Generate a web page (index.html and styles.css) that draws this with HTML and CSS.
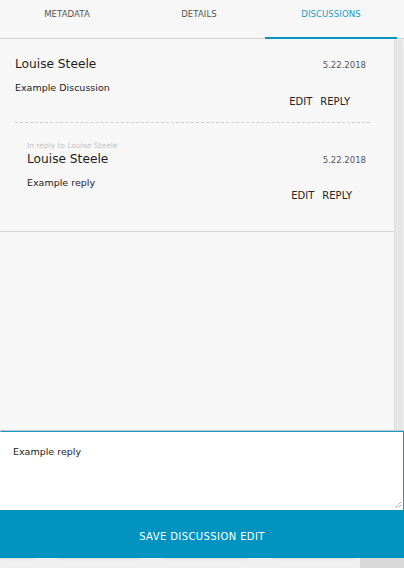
FILE: index.html
```html
<!DOCTYPE html>
<html>
<head>
<meta charset="utf-8">
<link rel="stylesheet" href="styles.css">
</head>
<body>
<div class="app">
  <nav class="tabs">
    <div class="tab">METADATA</div>
    <div class="tab">DETAILS</div>
    <div class="tab active">DISCUSSIONS</div>
  </nav>
  <div class="main">
    <div class="content">
      <div class="thread">
        <div class="post first">
          <div class="post-head">
            <span class="name">Louise Steele</span>
            <span class="date">5.22.2018</span>
          </div>
          <div class="body">Example Discussion</div>
          <div class="actions"><span>EDIT</span><span>REPLY</span></div>
        </div>
        <div class="divider"></div>
        <div class="post reply">
          <div class="reply-to">In reply to Louise Steele</div>
          <div class="post-head">
            <span class="name">Louise Steele</span>
            <span class="date">5.22.2018</span>
          </div>
          <div class="body">Example reply</div>
          <div class="actions"><span>EDIT</span><span>REPLY</span></div>
        </div>
      </div>
    </div>
    <div class="scrollbar"><div class="thumb"></div></div>
  </div>
  <div class="editor">
    <div class="textarea">Example reply</div>
    <svg class="grip" width="8" height="8" viewBox="0 0 8 8"><path d="M7 1L1 7M7 4L4 7" stroke="#777" stroke-width="1" stroke-dasharray="1 1"/></svg>
  </div>
  <div class="save">SAVE DISCUSSION EDIT</div>
  <div class="footer">
    <span class="chip c1"></span>
    <span class="chip c2"></span>
    <span class="chip c3"></span>
    <span class="chip c4"></span>
    <span class="corner"></span>
  </div>
</div>
</body>
</html>
```
FILE: styles.css
```css
* { box-sizing: border-box; }
html, body { margin: 0; padding: 0; }
body {
  width: 404px;
  height: 568px;
  overflow: hidden;
  font-family: "DejaVu Sans", Verdana, sans-serif;
  background: #f7f7f7;
  color: #222;
}
.app {
  display: flex;
  flex-direction: column;
  height: 568px;
}
.tabs {
  display: flex;
  height: 39px;
  padding-left: 1px;
  background: #f7f7f7;
  border-bottom: 1px solid #d2d2d2;
  flex: none;
}
.tab {
  width: 132px;
  display: flex;
  align-items: flex-start;
  justify-content: center;
  padding-top: 9px;
  font-size: 8.5px;
  color: #555;
  letter-spacing: 0.1px;
}
.tab.active {
  color: #1a9ac6;
  border-bottom: 2px solid #0892bd;
  margin-bottom: -1px;
}
.main {
  display: flex;
  height: 392px;
  flex: none;
  border-bottom: 1px solid #c8c8c8;
}
.content {
  flex: 1;
  background: #f7f7f7;
}
.thread {
  border-bottom: 1px solid #d4d4d4;
  padding: 18px 0 30px;
}
.post { padding: 0 28px 0 15px; }
.post.reply { padding-left: 27px; }
.post-head {
  display: flex;
  justify-content: space-between;
  align-items: baseline;
}
.name {
  font-size: 12.2px;
  color: #1d1d1d;
}
.date {
  font-size: 8.5px;
  color: #555;
}
.body {
  font-size: 9.5px;
  margin-top: 11px;
  color: #222;
}
.actions {
  display: flex;
  justify-content: flex-end;
  gap: 8px;
  font-size: 10px;
  margin-top: 3px;
  padding-right: 16px;
  color: #222;
}
.reply .actions { padding-right: 14px; margin-top: 2px; }
.divider {
  margin: 15px 24px 0 15px;
  border-top: 1px dashed #cfcfcf;
  height: 19px;
}
.reply-to {
  font-size: 7.5px;
  color: #c4c4c4;
  margin-bottom: 2px;
}
.scrollbar {
  width: 10px;
  background: #f0f0f0;
  display: flex;
  padding: 1px 1px 0 0;
}
.thumb {
  flex: 1;
  background: #e6e6e6;
  border-left: 1px solid #dcdcdc;
  border-radius: 2px 2px 0 0;
}
.editor {
  position: relative;
  height: 79px;
  flex: none;
  background: #fff;
  border: 1px solid #1198c4;
  border-left-color: #fff;
  border-bottom: none;
}
.textarea {
  padding: 14px 12px;
  font-size: 9.5px;
  color: #222;
}
.grip {
  position: absolute;
  right: 1px;
  bottom: 1px;
}
.save {
  height: 48px;
  flex: none;
  background: #0193bf;
  color: #fff;
  font-size: 10px;
  display: flex;
  align-items: center;
  justify-content: center;
  padding-top: 4px;
  letter-spacing: 0.4px;
}
.footer {
  flex: 1;
  display: flex;
  background: #efefef;
  position: relative;
}
.chip {
  height: 3px;
  background: linear-gradient(#e2e2e2, #efefef);
  border-radius: 0 0 3px 3px;
  margin-top: 0;
}
.c1 { width: 35px; margin-left: 0; }
.c2 { width: 83px; margin-left: 22px; }
.c3 { width: 85px; margin-left: 23px; }
.c4 { width: 83px; margin-left: 24px; }
.corner {
  margin-left: auto;
  width: 44px;
  background: #d9d9d9;
}
```
